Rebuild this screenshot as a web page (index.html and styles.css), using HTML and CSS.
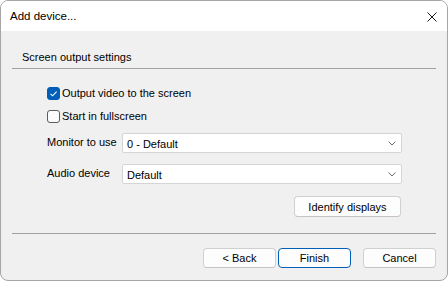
FILE: index.html
```html
<!DOCTYPE html>
<html>
<head>
<meta charset="utf-8">
<link rel="stylesheet" href="styles.css">
</head>
<body>
<div class="window">
  <div class="titlebar">
    <span class="title">Add device...</span>
    <svg class="close" width="10" height="10" viewBox="0 0 10 10"><path d="M0.5 0.5 L9.5 9.5 M9.5 0.5 L0.5 9.5" stroke="#1a1a1a" stroke-width="1"/></svg>
  </div>
  <div class="content">
    <div class="group-title">Screen output settings</div>
    <div class="form">
      <label class="check-row">
        <span class="box checked"><svg width="13" height="13" viewBox="0 0 13 13"><path d="M3.5 6.8 L5.6 8.8 L9.6 4.6" fill="none" stroke="#fff" stroke-width="1.1"/></svg></span>
        <span>Output video to the screen</span>
      </label>
      <label class="check-row second">
        <span class="box"></span>
        <span>Start in fullscreen</span>
      </label>
      <div class="combo-row first">
        <span class="label">Monitor to use</span>
        <div class="combo"><span>0 - Default</span><svg width="8" height="5" viewBox="0 0 8 5"><path d="M0.5 0.5 L4 4 L7.5 0.5" fill="none" stroke="#6a6a6a" stroke-width="1"/></svg></div>
      </div>
      <div class="combo-row second">
        <span class="label">Audio device</span>
        <div class="combo"><span>Default</span><svg width="8" height="5" viewBox="0 0 8 5"><path d="M0.5 0.5 L4 4 L7.5 0.5" fill="none" stroke="#6a6a6a" stroke-width="1"/></svg></div>
      </div>
      <div class="identify-row">
        <button class="btn identify">Identify displays</button>
      </div>
    </div>
    <div class="separator"></div>
    <div class="buttons">
      <button class="btn back">&lt; Back</button>
      <button class="btn finish">Finish</button>
      <button class="btn cancel">Cancel</button>
    </div>
  </div>
</div>
</body>
</html>
```
FILE: styles.css
```css
html, body {
  margin: 0;
  padding: 0;
  background: #ffffff;
}
body {
  font-family: "Segoe UI", "Liberation Sans", Arial, sans-serif;
  font-size: 11px;
  color: #000;
}
.window {
  width: 448px;
  height: 281px;
  box-sizing: border-box;
  border: 1px solid #a6a6a6;
  border-radius: 8px;
  overflow: hidden;
  background: #f0f0f0;
  display: flex;
  flex-direction: column;
}
.titlebar {
  height: 30px;
  background: #ffffff;
  display: flex;
  align-items: center;
  justify-content: space-between;
  padding: 0 10px 0 9px;
  flex-shrink: 0;
}
.title {
  font-size: 11.5px;
  line-height: 16px;
  margin-top: -1px;
}
.close {
  margin-top: 1px;
}
.content {
  padding: 0 11px;
  display: flex;
  flex-direction: column;
}
.group-title {
  margin-top: 18px;
  padding-left: 10px;
  height: 19px;
  line-height: 16px;
  border-bottom: 1px solid #a0a0a0;
}
.form {
  padding: 0 34px 0 35px;
  display: flex;
  flex-direction: column;
}
.check-row {
  display: flex;
  align-items: center;
  height: 13px;
  margin-top: 18px;
  gap: 2px;
  line-height: 13px;
  white-space: nowrap;
}
.check-row.second {
  margin-top: 10px;
}
.box {
  width: 13px;
  height: 13px;
  box-sizing: border-box;
  border: 1px solid #5c5c5c;
  border-radius: 3px;
  background: #fbfbfb;
  display: block;
  flex-shrink: 0;
}
.box.checked {
  background: #005fb8;
  border-color: #005fb8;
}
.box.checked svg {
  display: block;
  margin: -1px;
}
.combo-row {
  display: flex;
  align-items: center;
  height: 20px;
  margin-top: 10px;
}
.combo-row.second {
  margin-top: 11px;
}
.label {
  width: 75px;
  flex-shrink: 0;
  margin-top: -2px;
  white-space: nowrap;
}
.combo {
  flex: 1;
  height: 20px;
  box-sizing: border-box;
  background: #ffffff;
  border: 1px solid #d5d5d5;
  border-radius: 2px;
  display: flex;
  align-items: center;
  justify-content: space-between;
  padding: 0 5px 0 4px;
}
.combo span {
  margin-top: 1px;
}
.combo svg {
  display: block;
}
.identify-row {
  display: flex;
  justify-content: flex-end;
  margin-top: 12px;
  padding-right: 1px;
}
.btn {
  font-family: "Segoe UI", "Liberation Sans", Arial, sans-serif;
  font-size: 11px;
  color: #000;
  background: #fdfdfd;
  border: 1px solid #d0d0d0;
  border-bottom-color: #c4c4c4;
  border-radius: 4px;
  height: 20px;
  box-sizing: border-box;
  padding: 0;
  margin: 0;
  line-height: 16px;
}
.identify {
  width: 107px;
  height: 21px;
}
.separator {
  margin-top: 16px;
  height: 1px;
  background: #a0a0a0;
}
.buttons {
  display: flex;
  justify-content: flex-end;
  margin-top: 14px;
}
.back {
  width: 73px;
}
.finish {
  width: 73px;
  margin-left: 2px;
  border: 1px solid #005fb8;
}
.cancel {
  width: 73px;
  margin-left: 12px;
}
```
